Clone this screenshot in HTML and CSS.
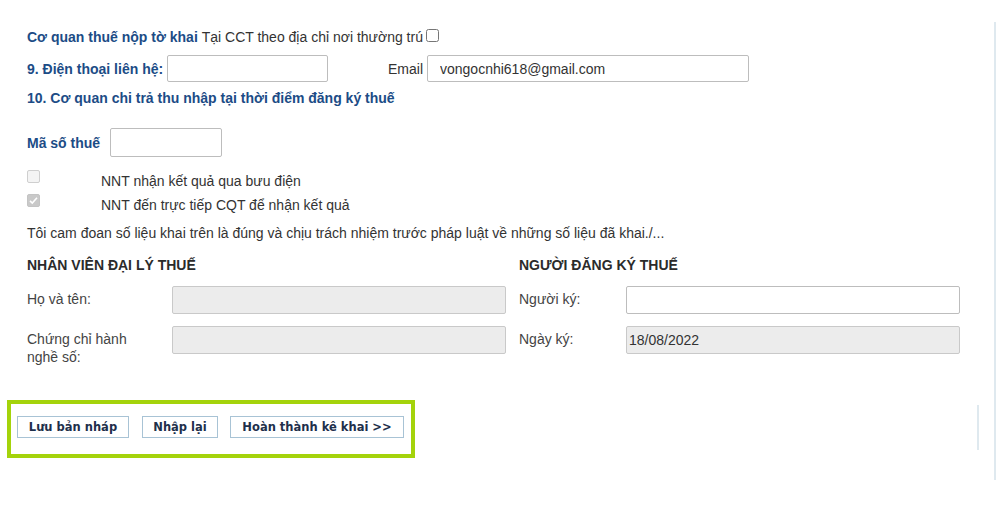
FILE: index.html
```html
<!DOCTYPE html>
<html>
  <head>
    <title>Đăng ký thuế</title>
    <link rel="stylesheet" href="styles.css">
  </head>
  <body>
    <div class="page">
      <div class="line first">
        <span class="lbl">Cơ quan thuế nộp tờ khai</span>&nbsp;Tại CCT theo địa chỉ nơi thường trú
        <input type="checkbox" class="cb-top" />
      </div>

      <div class="line contact">
        <span class="lbl phone-lbl">9. Điện thoại liên hệ:</span>
        <input type="text" class="field phone" />
        <span class="email-lbl">Email</span>
        <input type="text" class="field email" value="vongocnhi618@gmail.com" />
      </div>

      <div class="line section">
        <span class="lbl">10. Cơ quan chi trả thu nhập tại thời điểm đăng ký thuế</span>
      </div>

      <div class="line mst">
        <span class="lbl mst-lbl">Mã số thuế</span>
        <input type="text" class="field mst-input" />
      </div>

      <div class="checks">
        <div class="check-row">
          <span class="box"></span>
          <span class="check-text">NNT nhận kết quả qua bưu điện</span>
        </div>
        <div class="check-row">
          <span class="box checked">
            <svg width="11" height="11" viewBox="0 0 11 11"><path d="M2 5.8 L4.3 8 L9 2.8" fill="none" stroke="#ffffff" stroke-width="1.6"/></svg>
          </span>
          <span class="check-text">NNT đến trực tiếp CQT để nhận kết quả</span>
        </div>
      </div>

      <p class="statement">Tôi cam đoan số liệu khai trên là đúng và chịu trách nhiệm trước pháp luật về những số liệu đã khai./...</p>

      <div class="sign">
        <div class="sign-col left">
          <div class="sign-head">NHÂN VIÊN ĐẠI LÝ THUẾ</div>
          <div class="sign-row">
            <span class="sign-lbl">Họ và tên:</span>
            <input type="text" class="field wide grey" disabled />
          </div>
          <div class="sign-row">
            <span class="sign-lbl">Chứng chỉ hành<br>nghề số:</span>
            <input type="text" class="field wide grey" disabled />
          </div>
        </div>
        <div class="sign-col right">
          <div class="sign-head">NGƯỜI ĐĂNG KÝ THUẾ</div>
          <div class="sign-row">
            <span class="sign-lbl">Người ký:</span>
            <input type="text" class="field wide" />
          </div>
          <div class="sign-row">
            <span class="sign-lbl">Ngày ký:</span>
            <input type="text" class="field wide grey date" value="18/08/2022" disabled />
          </div>
        </div>
      </div>

      <div class="footer">
        <div class="actions">
          <button class="btn save">Lưu bản nháp</button>
          <button class="btn reset">Nhập lại</button>
          <button class="btn done">Hoàn thành kê khai &gt;&gt;</button>
        </div>
        <div class="divider"></div>
      </div>
    </div>
  </body>
</html>
```

FILE: styles.css
```css
/* Tờ khai đăng ký thuế - phần cuối */
body {
  margin: 0;
  background-color: #fff;
  font-family: "Liberation Sans", Arial, sans-serif;
  font-size: 14px;
  color: #333;
}

.page {
  width: 996px;
  min-height: 458px;
  margin-top: 22px;
  border-right: 2px solid #dfe9ef;
  box-sizing: border-box;
  padding-top: 6px;
}

.line {
  display: flex;
  align-items: center;
  padding-left: 27px;
  line-height: 18px;
  white-space: nowrap;
}

.lbl {
  color: #1c4c86;
  font-weight: bold;
}

.cb-top {
  width: 13px;
  height: 13px;
  margin: 0 0 0 3px;
  position: relative;
  top: -2px;
}

.field {
  box-sizing: border-box;
  flex-shrink: 0;
  height: 27px;
  border: 1px solid #bdbdbd;
  border-radius: 2px;
  font-family: "Liberation Sans", Arial, sans-serif;
  font-size: 14px;
  color: #333;
  background-color: #fff;
}

.contact {
  margin-top: 9px;
}

.phone-lbl {
  width: 140px;
}

.phone {
  width: 161px;
}

.email-lbl {
  margin-left: 60px;
  width: 39px;
  color: #333;
}

.email {
  width: 322px;
  padding-left: 12px;
}

.section {
  margin-top: 7px;
}

.mst {
  margin-top: 21px;
}

.mst-lbl {
  width: 83px;
}

.mst-input {
  width: 112px;
  height: 29px;
}

.checks {
  margin-top: 13px;
}

.check-row {
  display: flex;
  align-items: flex-start;
  padding-left: 27px;
  height: 24px;
}

.box {
  box-sizing: border-box;
  flex-shrink: 0;
  width: 13px;
  height: 13px;
  border: 1px solid #cfcfcf;
  border-radius: 2px;
  background-color: #f4f4f4;
  display: flex;
  align-items: center;
  justify-content: center;
}

.box.checked {
  background-color: #c9c9c9;
  border-color: #c4c4c4;
}

.check-text {
  margin-left: 61px;
  line-height: 18px;
  margin-top: 2px;
}

.statement {
  margin: 6px 0 0 27px;
  line-height: 18px;
}

.sign {
  display: flex;
  gap: 13px;
  padding-left: 27px;
  margin-top: 14px;
}

.sign-col.left {
  width: 479px;
}

.sign-col.right {
  width: 441px;
}

.sign-head {
  font-family: "Liberation Sans Narrow", "Arial Narrow", "Liberation Sans", sans-serif;
  font-stretch: condensed;
  font-weight: bold;
  font-size: 14px;
  line-height: 18px;
  color: #2b2b2b;
  margin-bottom: 12px;
}

.sign-row {
  display: flex;
  align-items: flex-start;
  margin-bottom: 12px;
}

.sign-lbl {
  flex-shrink: 0;
  padding-top: 4px;
  line-height: 18px;
  color: #444;
}

.left .sign-lbl {
  width: 145px;
}

.right .sign-lbl {
  width: 107px;
}

.wide {
  width: 334px;
  height: 28px;
}

.grey {
  background-color: #ececec;
  border-color: #c9c9c9;
}

.date {
  padding-left: 2px;
  color: #333;
}

.footer {
  display: flex;
  justify-content: space-between;
  align-items: flex-start;
  margin-top: 22px;
}

.actions {
  display: flex;
  gap: 13px;
  margin-left: 7px;
  width: 408px;
  box-sizing: border-box;
  border: 4px solid #a4d30b;
  padding: 12px 6px 0;
  height: 58px;
}

.btn {
  box-sizing: border-box;
  height: 22px;
  padding: 0;
  background-color: #fff;
  border: 1px solid #a8c3d5;
  font-family: "DejaVu Sans", Verdana, sans-serif;
  font-size: 11.5px;
  font-weight: bold;
  color: #1e2f4b;
  cursor: pointer;
}

.btn.save {
  width: 112px;
}

.btn.reset {
  width: 76px;
}

.btn.done {
  width: 174px;
  margin-left: -1px;
}

.divider {
  width: 2px;
  height: 45px;
  margin-top: 5px;
  margin-right: 15px;
  background-color: #dfe9ef;
}
```
